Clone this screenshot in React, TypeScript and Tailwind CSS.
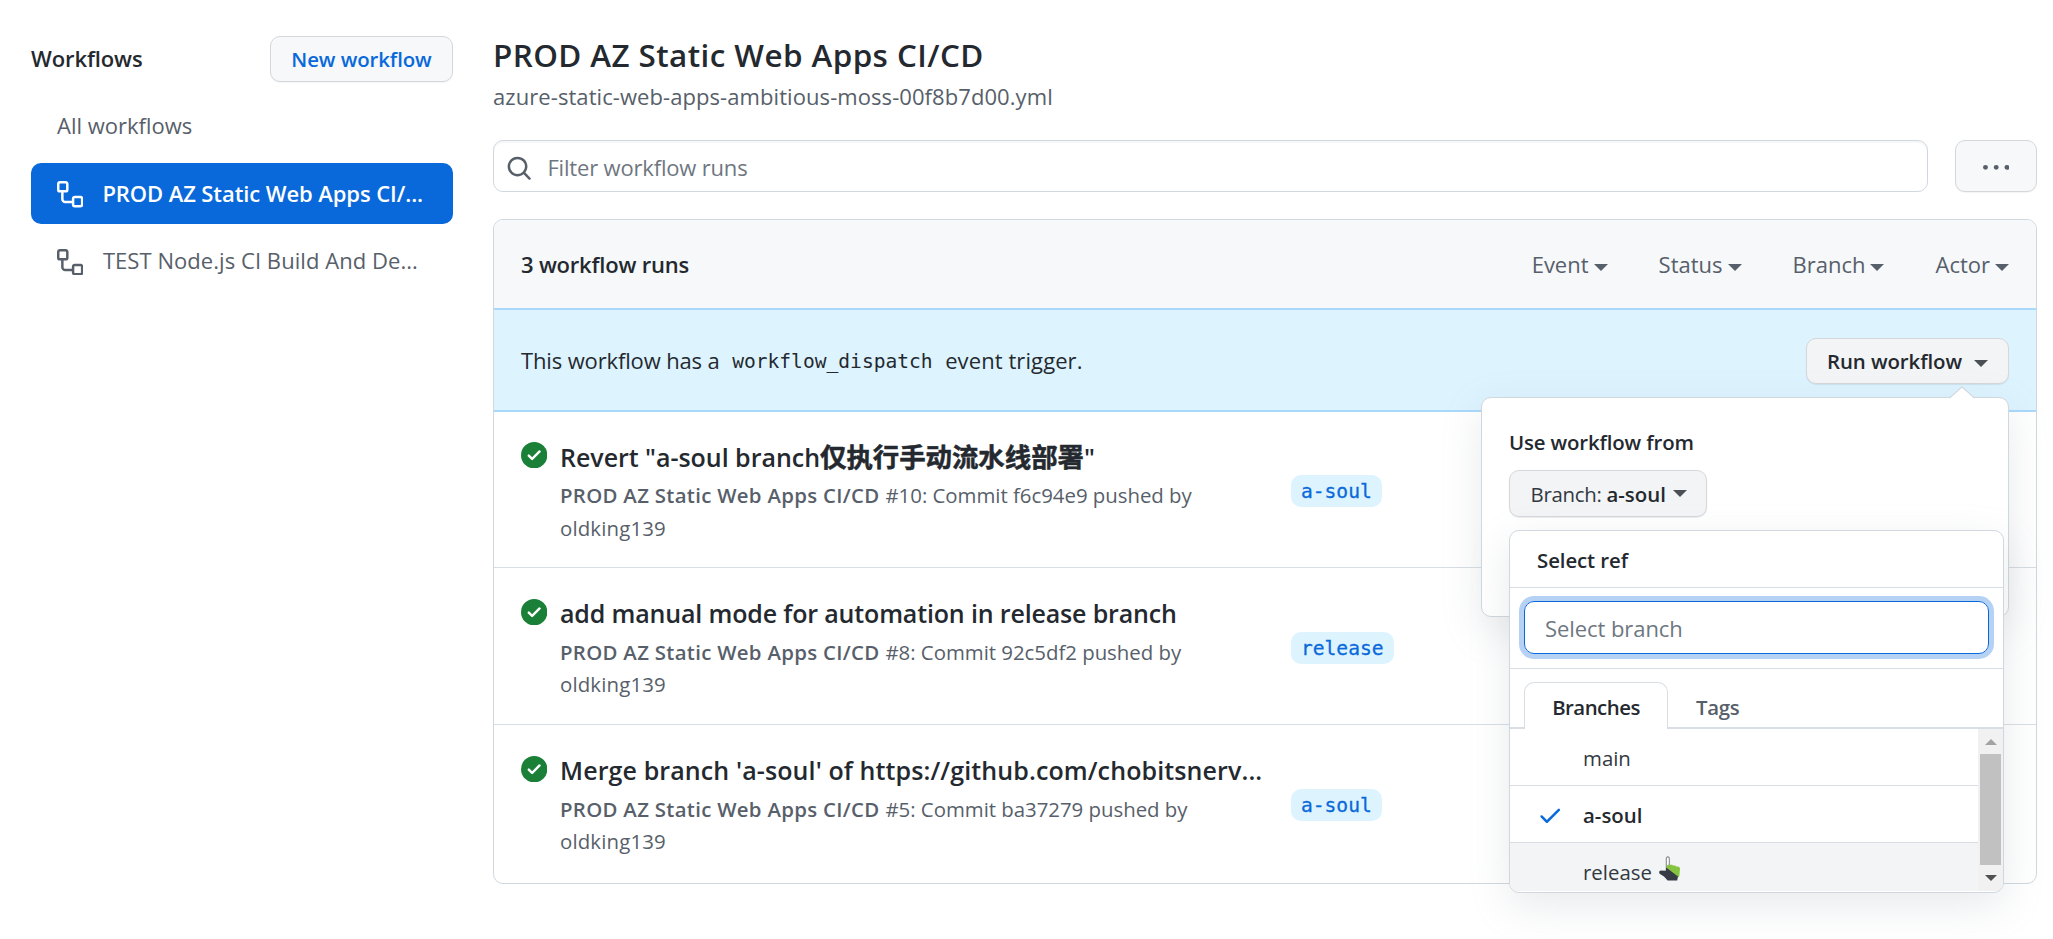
import type { ReactNode } from "react";

const WORKFLOW_PATH =
  "M0 1.75C0 .784.784 0 1.75 0h3.5C6.216 0 7 .784 7 1.75v3.5A1.75 1.75 0 015.25 7H4v4a1 1 0 001 1h4v-1.25C9 9.784 9.784 9 10.75 9h3.5c.966 0 1.75.784 1.75 1.75v3.5A1.75 1.75 0 0114.25 16h-3.5A1.75 1.75 0 019 14.25v-.75H5A2.5 2.5 0 012.5 11V7h-.75A1.75 1.75 0 010 5.25v-3.5zm1.75-.25a.25.25 0 00-.25.25v3.5c0 .138.112.25.25.25h3.5a.25.25 0 00.25-.25v-3.5a.25.25 0 00-.25-.25h-3.5zm9 9a.25.25 0 00-.25.25v3.5c0 .138.112.25.25.25h3.5a.25.25 0 00.25-.25v-3.5a.25.25 0 00-.25-.25h-3.5z";
const SEARCH_PATH =
  "M11.5 7a4.499 4.499 0 11-8.998 0A4.499 4.499 0 0111.5 7zm-.82 4.74a6 6 0 111.06-1.06l3.04 3.04a.75.75 0 11-1.06 1.06l-3.04-3.04z";
const SUCCESS_PATH =
  "M8 16A8 8 0 108 0a8 8 0 000 16zm3.78-9.72a.75.75 0 00-1.06-1.06L6.75 9.19 5.28 7.72a.75.75 0 00-1.06 1.06l2 2a.75.75 0 001.06 0l4.5-4.5z";
const CHECK_PATH =
  "M13.78 4.22a.75.75 0 010 1.06l-7.25 7.25a.75.75 0 01-1.06 0L2.22 9.28a.75.75 0 011.06-1.06L6 10.94l6.72-6.72a.75.75 0 011.06 0z";
const KEBAB_PATH =
  "M8 9a1.5 1.5 0 100-3 1.5 1.5 0 000 3zM1.5 9a1.5 1.5 0 100-3 1.5 1.5 0 000 3zm13 0a1.5 1.5 0 100-3 1.5 1.5 0 000 3z";

function Octicon({ path, className = "" }: { path: string; className?: string }) {
  return (
    <svg viewBox="0 0 16 16" fill="currentColor" fillRule="evenodd" className={`size-[26.4px] shrink-0 ${className}`}>
      <path d={path} />
    </svg>
  );
}

function Caret({ className = "" }: { className?: string }) {
  return (
    <svg viewBox="0 0 14 7" fill="currentColor" className={`h-[7px] w-[14px] shrink-0 ${className}`}>
      <path d="M0 0h14L7 7z" />
    </svg>
  );
}

function Sidebar() {
  return (
    <aside className="w-[422px] shrink-0 pt-9">
      <div className="flex h-[46px] items-center justify-between">
        <h2 className="pb-[2px] font-semibold tracking-[-0.005em] text-[#24292f]">Workflows</h2>
        <button className="h-[46px] w-[183px] rounded-[10px] border border-[#d5d8da] bg-[#f6f8fa] text-[20.4px] font-semibold tracking-[-0.004em] text-[#0969da] shadow-[0_1px_1px_rgba(27,31,36,0.05)]">
          New workflow
        </button>
      </div>
      <nav className="mt-[13px] flex flex-col gap-[6px] text-[#57606a]">
        <a className="flex h-[62px] items-center pb-[2px] pl-[26px]">All workflows</a>
        <a className="flex h-[61px] items-center rounded-[10px] bg-[#0969da] pl-[26px] font-semibold tracking-[-0.004em] text-white">
          <Octicon path={WORKFLOW_PATH} className="mt-[2px] mr-[19px]" />
          PROD AZ Static Web Apps CI/...
        </a>
        <a className="flex h-[61px] items-center pl-[26px] tracking-[0.0025em]">
          <Octicon path={WORKFLOW_PATH} className="mt-[3px] mr-[19.5px]" />
          TEST Node.js CI Build And De...
        </a>
      </nav>
    </aside>
  );
}

function BranchItem({ children, selected, hover }: { children: ReactNode; selected?: boolean; hover?: boolean }) {
  return (
    <li
      className={`flex h-[57px] shrink-0 items-center border-b border-[#d8dee4] pt-[2px] pl-[27px] ${
        selected ? "font-semibold text-[#24292f]" : "text-[#32383f]"
      } ${hover ? "bg-[#f3f4f6]" : ""}`}
    >
      <span className="w-[46px]">{selected && <Octicon path={CHECK_PATH} className="text-[#0969da]" />}</span>
      {children}
    </li>
  );
}

function HandCursor() {
  return (
    <svg viewBox="0 0 22 25" className="mt-[-8px] ml-[7px] h-[25px] w-[22px]">
      <path d="M7.3 15V2.6C7.3 1.4 8 .9 8.8.9s1.5.6 1.5 1.7V9" fill="#fff" stroke="#85888d" strokeWidth="1.1" />
      <path d="M7.2 12.5 8.4 8.8h4.9l.6.7h2.4l.8.9h2.2l1.8 1.6-.8 8.3-1.4 1.4-5-3.4z" fill="#86c440" />
      <path d="M0 15.8 1.6 14.6l5.2.1.4-3.2L19 20.4l-.8 4.1H8.6L5 20.6.6 17.8z" fill="#363b44" />
    </svg>
  );
}

function RefMenu() {
  return (
    <div className="absolute top-[132px] left-[27px] flex h-[363px] w-[495px] flex-col overflow-hidden rounded-[10px] border border-[#d0d7de] bg-white">
      <div className="flex h-[57px] shrink-0 items-center border-b border-[#d8dee4] pt-[2px] pl-[27px] font-semibold tracking-[-0.004em] text-[#24292f]">
        Select ref
      </div>
      <div className="h-[81px] shrink-0 border-b border-[#d8dee4] px-[14px] pt-[13px]">
        <div className="flex h-[53px] items-center rounded-[10px] border border-[#0969da] pt-px pl-5 text-[22px] tracking-[-0.003em] text-[#6e7781] shadow-[0_0_0_5px_rgba(9,105,218,0.3)]">
          Select branch
        </div>
      </div>
      <div className="flex h-[60px] shrink-0 items-end font-semibold">
        <div className="w-[14px] self-stretch border-b-2 border-[#d8dee4]" />
        <div className="flex h-[47px] w-[144px] items-center justify-center rounded-t-[10px] border border-b-0 border-[#d8dee4] pt-[2px] tracking-[-0.025em] text-[#24292f]">
          Branches
        </div>
        <div className="flex h-[47px] flex-1 items-center border-b-2 border-[#d8dee4] pt-[6px] pl-7 tracking-[-0.015em] text-[#57606a]">
          Tags
        </div>
      </div>
      <div className="flex min-h-0 flex-1 pb-px">
        <ul className="flex flex-1 flex-col overflow-hidden">
          <BranchItem>main</BranchItem>
          <BranchItem selected>a-soul</BranchItem>
          <BranchItem hover>
            release
            <HandCursor />
          </BranchItem>
        </ul>
        <div className="flex w-[25px] flex-col items-center bg-[#f1f1f1]">
          <svg viewBox="0 0 12 6" className="mt-[10px] h-[6px] w-3">
            <path d="M0 6h12L6 0z" fill="#a3a3a3" />
          </svg>
          <div className="mt-[9px] h-[111px] w-[21px] bg-[#c1c1c1]" />
          <svg viewBox="0 0 12 6" className="mt-[10px] h-[6px] w-3">
            <path d="M0 0h12L6 6z" fill="#505050" />
          </svg>
        </div>
      </div>
    </div>
  );
}

function DispatchPopover() {
  return (
    <div className="absolute top-[59px] right-0 z-10 h-[220px] w-[528px] rounded-[10px] border border-[#d0d7de] bg-white px-[27px] text-[20.4px] shadow-[0_13px_40px_rgba(140,149,159,0.2)]">
      <svg viewBox="0 0 26 13" className="absolute -top-3 right-[33px] h-[13px] w-[26px]">
        <path d="M0 13 13 .8 26 13z" fill="#fff" />
        <path d="M.5 12.2 13 .8l12.5 11.4" fill="none" stroke="#d0d7de" strokeWidth="1.1" />
      </svg>
      <p className="flex h-[72px] items-end pb-[12px] leading-[32px] font-semibold tracking-[-0.007em] text-[#24292f]">
        Use workflow from
      </p>
      <button className="flex h-[47px] w-[198px] items-center rounded-[10px] border border-[#d5d8da] bg-[#f3f4f6] pl-[20.5px] text-[#32383f] shadow-[0_1px_1px_rgba(27,31,36,0.08)]">
        <span className="pt-[2px] tracking-[-0.014em]">Branch:</span>
        <span className="ml-[5px] pt-[2px] font-semibold text-[#24292f]">a-soul</span>
        <Caret className="ml-[7px] text-[#4b4f56]" />
      </button>
      <div className="absolute top-[132px] left-[27px] h-[363px] w-[495px] rounded-[10px] shadow-[0_13px_40px_rgba(140,149,159,0.2)]" />
      <RefMenu />
    </div>
  );
}

const RUNS = [
  {
    title: (
      <>
        Revert "a-soul branch
        <span className="font-['Noto_Sans_CJK_SC',sans-serif] text-[26.4px] font-bold tracking-normal [-webkit-text-stroke:0.5px_#24292f]">
          仅执行手动流水线部署
        </span>
        "
      </>
    ),
    meta: "#10: Commit f6c94e9 pushed by",
    branch: "a-soul",
    row: "h-[156px] border-b",
    tracking: "tracking-[-0.001em]",
  },
  {
    title: <>add manual mode for automation in release branch</>,
    meta: "#8: Commit 92c5df2 pushed by",
    branch: "release",
    row: "h-[157px] border-b pt-[0.6px]",
    tracking: "tracking-[-0.0062em]",
  },
  {
    title: <>Merge branch 'a-soul' of https://github.com/chobitsnerv...</>,
    meta: "#5: Commit ba37279 pushed by",
    branch: "a-soul",
    row: "h-[158px] pt-[0.6px]",
    tracking: "tracking-[0.0045em]",
  },
];

const FILTERS = ["Event", "Status", "Branch", "Actor"];

export default function App() {
  return (
    <div className="flex h-[939px] w-[2053px] gap-10 overflow-hidden bg-white pl-[31px] font-['Open_Sans','Noto_Sans_CJK_SC',sans-serif] text-[22px] leading-[31px]">
      <Sidebar />
      <main className="w-[1544px] shrink-0 pt-[29px]">
        <h1 className="h-[52px] text-[31.4px] leading-[51px] font-semibold tracking-[0.0135em] text-[#24292f]">
          PROD AZ Static Web Apps CI/CD
        </h1>
        <p className="tracking-[0.0033em] text-[#57606a]">azure-static-web-apps-ambitious-moss-00f8b7d00.yml</p>

        <div className="mt-7 flex h-[52px] justify-between">
          <div className="flex w-[1435px] items-center rounded-[10px] border border-[#d0d7de] pl-3 text-[#6e7781] shadow-[inset_0_2px_0_rgba(208,215,222,0.2)]">
            <Octicon path={SEARCH_PATH} className="mt-[4px] text-[#57606a]" />
            <span className="mt-[2px] ml-[15px] tracking-[-0.008em]">Filter workflow runs</span>
          </div>
          <button className="flex w-[82px] items-center justify-center rounded-[10px] border border-[#d5d8da] bg-[#f6f8fa] text-[#57606a] shadow-[0_1px_1px_rgba(27,31,36,0.05)]">
            <Octicon path={KEBAB_PATH} className="mt-[5px]" />
          </button>
        </div>

        <section className="mt-[27px] rounded-[10px] border border-[#d0d7de]">
          <header className="flex h-[88px] items-center justify-between rounded-t-[9px] bg-[#f6f8fa] px-[27px]">
            <strong className="font-semibold tracking-[-0.0095em] text-[#24292f]">3 workflow runs</strong>
            <div className="flex gap-[51px] text-[#57606a]">
              {FILTERS.map((name) => (
                <span key={name} className="flex items-center">
                  {name}
                  <Caret className="mt-[6px] ml-[5px]" />
                </span>
              ))}
            </div>
          </header>

          <div className="flex h-[104px] items-center justify-between border-y-2 border-[#a9d8fd] bg-[#ddf4ff] px-[27px] pt-[2px] text-[#24292f]">
            <p className="flex">
              <span className="tracking-[-0.0064em]">This workflow has a</span>
              <code className="ml-[12.5px] pt-px font-['DejaVu_Sans_Mono',monospace] text-[19.6px]">workflow_dispatch</code>
              <span className="ml-[12.5px] tracking-[0.004em]">event trigger.</span>
            </p>
            <div className="relative">
              <button className="flex h-[46px] w-[203px] items-center rounded-[10px] border border-[#d5d8da] bg-[#f3f4f6] pl-[20px] text-[20.4px] font-semibold tracking-[-0.004em] shadow-[0_1px_1px_rgba(27,31,36,0.08)]">
                Run workflow
                <Caret className="mt-[5px] ml-[12px] text-[#4b4f56]" />
              </button>
              <DispatchPopover />
            </div>
          </div>

          {RUNS.map((run) => (
            <article key={run.meta} className={`flex border-[#d8dee4] pl-[27px] ${run.row}`}>
              <Octicon path={SUCCESS_PATH} className="mt-[30px] text-[#1a7f37]" />
              <div className="ml-[12.6px] w-[731px] pt-6">
                <h3 className={`h-10 text-[25px] leading-10 font-semibold whitespace-nowrap text-[#24292f] ${run.tracking}`}>
                  {run.title}
                </h3>
                <div className="mt-[3px] text-[20.4px] leading-[32.5px] text-[#57606a]">
                  <p className="flex gap-[6px]">
                    <span className="font-semibold tracking-[0.0148em]">PROD AZ Static Web Apps CI/CD</span>
                    <span className="tracking-[-0.001em]">{run.meta}</span>
                  </p>
                  <p className="tracking-[0.008em]">oldking139</p>
                </div>
              </div>
              <div className="pt-[63px]">
                <span className="flex h-8 items-center rounded-[10px] bg-[#ddf4ff] px-[10px] pt-px font-['DejaVu_Sans_Mono',monospace] text-[19.6px] text-[#0969da] [-webkit-text-stroke:0.3px_#0969da]">
                  {run.branch}
                </span>
              </div>
            </article>
          ))}
        </section>
      </main>
    </div>
  );
}
